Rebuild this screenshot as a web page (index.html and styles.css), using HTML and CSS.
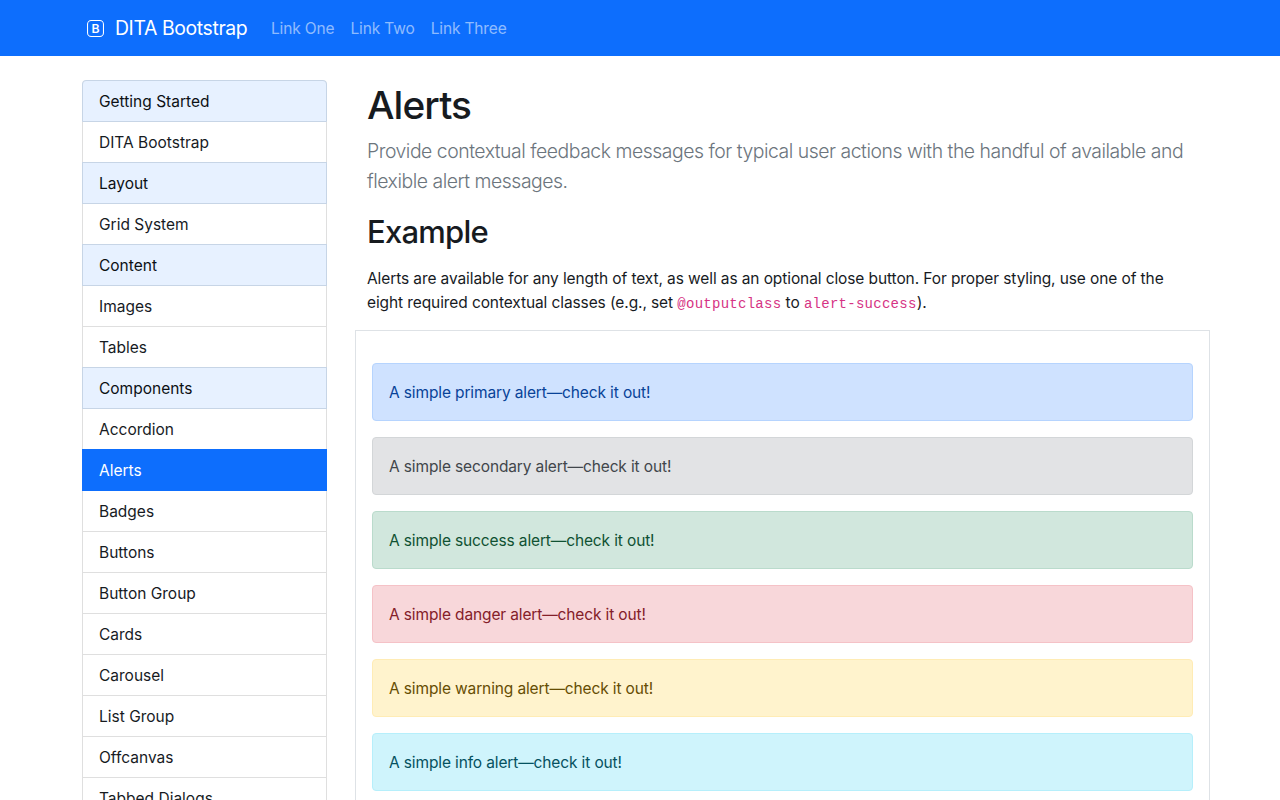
FILE: index.html
```html
<!DOCTYPE html>
<html lang="en">
<head>
<meta charset="utf-8">
<title>Alerts - DITA Bootstrap</title>
<link rel="stylesheet" href="styles.css">
</head>
<body>
<nav class="navbar">
  <a class="brand">
    <svg class="brand-icon" viewBox="0 0 16 16" width="17" height="17" aria-hidden="true">
      <rect x=".5" y=".5" width="15" height="15" rx="3.5" fill="none" stroke="currentColor"/>
      <text x="8.1" y="12.1" text-anchor="middle" class="brand-letter">B</text>
    </svg>
    <span class="brand-name">DITA Bootstrap</span>
  </a>
  <div class="nav-links">
    <a class="nav-link">Link One</a>
    <a class="nav-link">Link Two</a>
    <a class="nav-link">Link Three</a>
  </div>
</nav>
<div class="layout">
  <aside class="sidebar">
    <ul class="list-group">
      <li class="item heading">Getting Started</li>
      <li class="item">DITA Bootstrap</li>
      <li class="item heading">Layout</li>
      <li class="item">Grid System</li>
      <li class="item heading">Content</li>
      <li class="item">Images</li>
      <li class="item">Tables</li>
      <li class="item heading">Components</li>
      <li class="item">Accordion</li>
      <li class="item active">Alerts</li>
      <li class="item">Badges</li>
      <li class="item">Buttons</li>
      <li class="item">Button Group</li>
      <li class="item">Cards</li>
      <li class="item">Carousel</li>
      <li class="item">List Group</li>
      <li class="item">Offcanvas</li>
      <li class="item">Tabbed Dialogs</li>
    </ul>
  </aside>
  <main class="content">
    <h1 class="title">Alerts</h1>
    <p class="lead">Provide contextual feedback messages for typical user actions with the handful of available and<br>flexible alert messages.</p>
    <h2 class="subtitle">Example</h2>
    <p class="text">Alerts are available for any length of text, as well as an optional close button. For proper styling, use one of the<br>eight required contextual classes (e.g., set <code>@outputclass</code> to <code>alert-success</code>).</p>
    <div class="example">
      <div class="alert primary">A simple primary alert—check it out!</div>
      <div class="alert secondary">A simple secondary alert—check it out!</div>
      <div class="alert success">A simple success alert—check it out!</div>
      <div class="alert danger">A simple danger alert—check it out!</div>
      <div class="alert warning">A simple warning alert—check it out!</div>
      <div class="alert info">A simple info alert—check it out!</div>
    </div>
  </main>
</div>
</body>
</html>
```
FILE: styles.css
```css
* { box-sizing: border-box; }

html, body { height: 100%; }

body {
  margin: 0;
  overflow: hidden;
  background: #fff;
  color: #171b1f;
  font: 400 15.5px/24px Inter, "Liberation Sans", sans-serif;
}

h1, h2, p, ul { margin: 0; padding: 0; }

.navbar {
  display: flex;
  align-items: center;
  height: 56px;
  padding: 0 87px;
  background: #0d6efd;
}

.brand {
  display: flex;
  align-items: center;
  gap: 11px;
  width: 160px;
  color: #fff;
  font-size: 19.4px;
  line-height: 30px;
  white-space: nowrap;
}

.brand-icon { flex: none; }
.brand-letter { fill: currentColor; font: 600 11.5px Inter, sans-serif; }
.brand-name { letter-spacing: -0.38px; }

.nav-links {
  display: flex;
  gap: 16px;
  margin-left: 24px;
  padding-top: 1px;
  color: rgba(255, 255, 255, .55);
  letter-spacing: -0.14px;
}

.layout {
  display: flex;
  width: 1140px;
  height: 720px;
  margin: 24px auto 0;
  overflow: hidden;
}

.sidebar { width: 285px; padding: 0 28px 0 12px; }

.list-group {
  list-style: none;
  border: 1px solid rgba(0, 0, 0, .125);
  border-radius: 4px;
}

.item {
  height: 41px;
  padding: 9px 16px 7px;
  border-bottom: 1px solid #dfdfdf;
}

.heading {
  margin: -1px -1px 0;
  height: 42px;
  border: 1px solid #c7d5e6;
  background: #e7f1ff;
  color: #0c1014;
}

.heading:first-child { border-radius: 4px 4px 0 0; }

.active {
  margin: -1px -1px 0;
  height: 42px;
  padding: 10px 17px 8px;
  border: 0;
  background: #0d6efd;
  color: #fff;
}

.content { width: 855px; }

.title, .lead, .subtitle, .text { margin-left: 12px; white-space: nowrap; }

.title {
  margin-bottom: 7px;
  padding-top: 1px;
  font-weight: 500;
  font-size: 38.8px;
  line-height: 48px;
  letter-spacing: -0.9px;
}

.lead {
  margin-bottom: 16px;
  color: #6c757d;
  font-weight: 300;
  font-size: 19.4px;
  line-height: 30px;
  letter-spacing: -0.47px;
}

.subtitle {
  margin-bottom: 15px;
  padding-top: 1px;
  font-weight: 500;
  font-size: 31px;
  line-height: 38.4px;
  letter-spacing: -0.75px;
}

.text { margin-bottom: 15px; padding-top: 1px; letter-spacing: -0.1px; }

code { color: #d63384; font: 14px "Liberation Mono", monospace; letter-spacing: .27px; }

.example {
  display: flex;
  flex-direction: column;
  gap: 16px;
  height: 600px;
  padding: 32px 16px;
  border: 1px solid #dee2e6;
}

.alert {
  height: 58px;
  padding: 17px 16px 15px;
  border: 1px solid;
  border-radius: 4px;
  letter-spacing: -0.13px;
}

.primary { color: #084298; background: #cfe2ff; border-color: #b6d4fe; }
.secondary { color: #41464b; background: #e2e3e5; border-color: #d3d6d8; }
.success { color: #0f5132; background: #d1e7dd; border-color: #badbcc; }
.danger { color: #842029; background: #f8d7da; border-color: #f5c2c7; }
.warning { color: #664d03; background: #fff3cd; border-color: #ffecb5; }
.info { color: #055160; background: #cff4fc; border-color: #b6effb; }
```
